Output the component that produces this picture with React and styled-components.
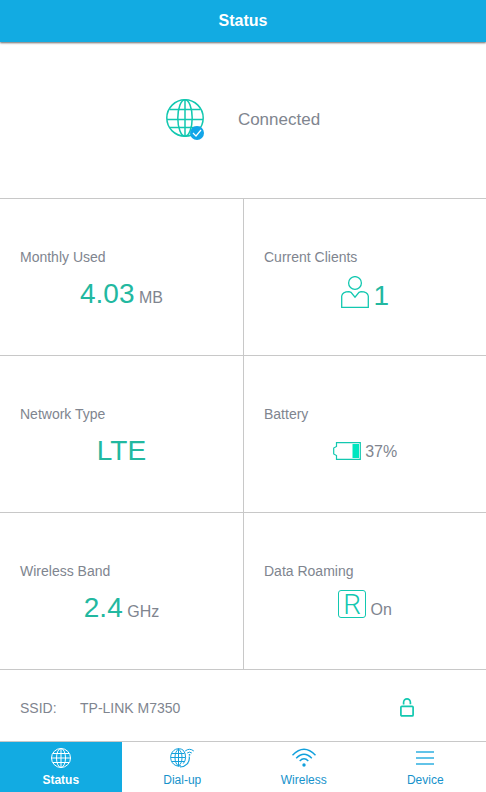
import React from 'react'
import styled, { createGlobalStyle } from 'styled-components'

const GlobalStyle = createGlobalStyle`
    * {
        box-sizing: border-box;
    }
    body {
        margin: 0;
        background: #fff;
        color: #80858f;
        font-family: "Liberation Sans", Arial, sans-serif;
        font-size: 16px;
    }
`
const StyledApp = styled.div`
    display: flex;
    flex-direction: column;
    min-height: 100vh;
`
const StyledHeader = styled.header`
    padding: 11px 0;
    background: #12abe2;
    box-shadow: 0 1px 2px rgba(0,0,0,.6);
    text-align: center;
`
const StyledTitle = styled.h1`
    margin: 0;
    color: #fff;
    font-size: 16px;
    line-height: 20px;
`
const StyledMain = styled.main`
    flex: 1;
`
const StyledConnection = styled.section`
    display: flex;
    justify-content: center;
    align-items: center;
    gap: 32px;
    padding: 57px 20px;
    font-size: 17px;
    line-height: 22px;
`
const StyledGrid = styled.section`
    display: grid;
    grid-template-columns: 1fr 1fr;
`
const StyledCell = styled.div`
    padding: 50px 20px 43px;
    border-top: 1px solid #c8c8c8;
    &:nth-child(even){
        border-left: 1px solid #c8c8c8;
    }
`
const StyledLabel = styled.h2`
    margin: 0 0 11px;
    font-size: 14px;
    font-weight: normal;
    line-height: 16px;
`
const StyledValue = styled.div`
    display: flex;
    justify-content: center;
    align-items: ${props => props.$align || 'center'};
    height: 36px;
    svg {
        vertical-align: text-bottom;
    }
`
const StyledNumber = styled.span`
    color: #22b8a0;
    font-size: 28px;
`
const StyledRoaming = styled.span`
    display: inline-block;
    width: 28px;
    height: 28px;
    border: 1px solid #12c8b0;
    border-radius: 3px;
    color: #12c8b0;
    font-family: Roboto, sans-serif;
    font-size: 28px;
    font-weight: 300;
    line-height: 28px;
    text-align: center;
    vertical-align: text-bottom;
`
const StyledSsid = styled.section`
    display: flex;
    align-items: center;
    padding: 28px 72px 24px 20px;
    border-top: 1px solid #c8c8c8;
    font-size: 14px;
`
const StyledSsidLabel = styled.span`
    width: 60px;
`
const StyledSsidName = styled.span`
    flex: 1;
`
const StyledNav = styled.nav`
    display: grid;
    grid-template-columns: repeat(4, 1fr);
    border-top: 1px solid #c8c8c8;
`
const StyledTab = styled.a`
    display: flex;
    flex-direction: column;
    align-items: center;
    gap: 4px;
    padding: 5px 0;
    background: ${props => props.$active ? '#12abe2' : '#fff'};
    color: ${props => props.$active ? '#fff' : '#1692cb'};
    font-size: 12px;
    font-weight: ${props => props.$active ? 'bold' : 'normal'};
    line-height: 14px;
    text-decoration: none;
`

const GlobeIcon = () => (
    <svg width="40" height="42" viewBox="0 0 40 42" fill="none" stroke="#12c8b0" strokeWidth="1.5" aria-hidden="true">
        <circle cx="19" cy="19" r="18.2" />
        <ellipse cx="19" cy="19" rx="7.2" ry="18.2" />
        <path d="M19 1v36M1 20.5h36M4 10.5h30M4 28.5h30" />
        <circle cx="31" cy="34" r="7" fill="#12a5e8" stroke="none" />
        <path d="M27 34l3 3 5-6" stroke="#fff" strokeWidth="1.2" />
    </svg>
)

const ClientIcon = () => (
    <svg width="28" height="32" viewBox="0 0 28 32" fill="none" stroke="#12c8b0" strokeWidth="1.3" aria-hidden="true">
        <circle cx="14" cy="7" r="6.4" />
        <path d="M.7 31.3V20Q1.5 15.7 8 15.6L10 16.3L14 21.2L18 16.3L20 15.6Q26.5 15.7 27.3 20V31.3Z" />
    </svg>
)

const BatteryIcon = () => (
    <svg width="28" height="18" viewBox="0 0 28 18" aria-hidden="true">
        <path d="M3.5 .7H27.3V17.3H3.5V13.5L.7 12V6L3.5 4.5Z" fill="none" stroke="#12c8b0" strokeWidth="1.2" />
        <path d="M19.5 2H26V16H19.5Z" fill="#00e6c0" />
    </svg>
)

const LockIcon = () => (
    <svg width="14" height="19" viewBox="0 0 14 19" fill="none" stroke="#12c8b0" strokeWidth="1.7" aria-hidden="true">
        <rect x=".9" y="8.3" width="12.2" height="9.6" rx="1" />
        <path d="M3.6 6.6V4.5A3.4 3.6 0 0 1 10.4 4.5V6.2" />
    </svg>
)

const StatusIcon = () => (
    <svg width="22" height="22" viewBox="0 0 22 22" fill="none" stroke="currentColor" aria-hidden="true">
        <circle cx="11" cy="11" r="9.5" />
        <ellipse cx="11" cy="11" rx="4.5" ry="9.5" />
        <path d="M11 1.5v19M1.5 11h19M3 6.5h16M3 15.5h16" />
    </svg>
)

const DialIcon = () => (
    <svg width="24" height="22" viewBox="0 0 24 22" fill="none" stroke="#12a0dc" aria-hidden="true">
        <path d="M13.2 3.2A8 8.7 0 1 0 11 18.7M13.2 3.2Q15.8 6 15.6 10.5Q15.4 14.5 13.2 16.6" />
        <path d="M8.5 2v17M1 10.5h14.5M2 6.5h12.5M2 14.5h12.5" />
        <path d="M8.5 2C3.8 5 3.8 16 8.5 19C13.2 16 13.2 5 8.5 2" />
        <path d="M10 20C16 19.5 20.2 15.5 19.2 9.5" strokeWidth="1.2" />
        <path d="M15.2 4Q19.5 .6 23.8 4M17.2 6Q19.5 4.2 21.8 6" />
        <circle cx="19.5" cy="7.8" r=".9" fill="#12a0dc" stroke="none" />
    </svg>
)

const WifiIcon = () => (
    <svg width="26" height="22" viewBox="0 0 26 22" fill="none" stroke="#12a0dc" strokeWidth="1.4" aria-hidden="true">
        <path d="M1.5 8.3Q13 -3.7 24.5 8.3M5.2 11.3Q13 3.3 20.8 11.3M8.7 14Q13 9.5 17.3 14" />
        <circle cx="13" cy="18" r="1.7" fill="#12a0dc" stroke="none" />
    </svg>
)

const DeviceIcon = () => (
    <svg width="18" height="22" viewBox="0 0 18 22" fill="none" stroke="#62c3e8" strokeWidth="2" aria-hidden="true">
        <path d="M0 5h18M0 11h18M0 17h18" />
    </svg>
)

const App = () => {
    return (
        <>
            <GlobalStyle />
            <StyledApp>
                <StyledHeader>
                    <StyledTitle>Status</StyledTitle>
                </StyledHeader>
                <StyledMain>
                    <StyledConnection>
                        <GlobeIcon />
                        <span>Connected</span>
                    </StyledConnection>
                    <StyledGrid>
                        <StyledCell>
                            <StyledLabel>Monthly Used</StyledLabel>
                            <StyledValue>
                                <span><StyledNumber>4.03</StyledNumber> MB</span>
                            </StyledValue>
                        </StyledCell>
                        <StyledCell>
                            <StyledLabel>Current Clients</StyledLabel>
                            <StyledValue>
                                <span><ClientIcon /> <StyledNumber>1</StyledNumber></span>
                            </StyledValue>
                        </StyledCell>
                        <StyledCell>
                            <StyledLabel>Network Type</StyledLabel>
                            <StyledValue>
                                <StyledNumber>LTE</StyledNumber>
                            </StyledValue>
                        </StyledCell>
                        <StyledCell>
                            <StyledLabel>Battery</StyledLabel>
                            <StyledValue>
                                <span><BatteryIcon /> 37%</span>
                            </StyledValue>
                        </StyledCell>
                        <StyledCell>
                            <StyledLabel>Wireless Band</StyledLabel>
                            <StyledValue>
                                <span><StyledNumber>2.4</StyledNumber> GHz</span>
                            </StyledValue>
                        </StyledCell>
                        <StyledCell>
                            <StyledLabel>Data Roaming</StyledLabel>
                            <StyledValue $align="flex-start">
                                <span><StyledRoaming>R</StyledRoaming> On</span>
                            </StyledValue>
                        </StyledCell>
                    </StyledGrid>
                    <StyledSsid>
                        <StyledSsidLabel>SSID:</StyledSsidLabel>
                        <StyledSsidName>TP-LINK M7350</StyledSsidName>
                        <LockIcon />
                    </StyledSsid>
                </StyledMain>
                <StyledNav>
                    <StyledTab href="#status" $active><StatusIcon />Status</StyledTab>
                    <StyledTab href="#dial-up"><DialIcon />Dial-up</StyledTab>
                    <StyledTab href="#wireless"><WifiIcon />Wireless</StyledTab>
                    <StyledTab href="#device"><DeviceIcon />Device</StyledTab>
                </StyledNav>
            </StyledApp>
        </>
    )
}
export default App
